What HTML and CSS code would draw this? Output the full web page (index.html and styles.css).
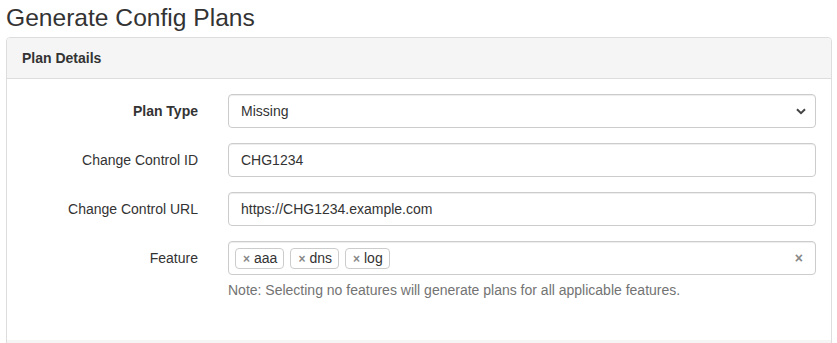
FILE: index.html
```html
<!DOCTYPE html>
<html>
<head>
<meta charset="utf-8">
<link rel="stylesheet" href="styles.css">
</head>
<body>
<h2 class="page-title">Generate Config Plans</h2>
<div class="panel">
  <div class="panel-heading">Plan Details</div>
  <div class="panel-body">
    <div class="form-group">
      <label class="control-label bold">Plan Type</label>
      <div class="control-col">
        <div class="form-control select">
          <span>Missing</span>
          <svg class="chevron" width="10" height="7" viewBox="0 0 10 7"><path d="M1 1.2 L5 5.2 L9 1.2" fill="none" stroke="#444" stroke-width="2"/></svg>
        </div>
      </div>
    </div>
    <div class="form-group">
      <label class="control-label">Change Control ID</label>
      <div class="control-col">
        <div class="form-control">CHG1234</div>
      </div>
    </div>
    <div class="form-group">
      <label class="control-label">Change Control URL</label>
      <div class="control-col">
        <div class="form-control">https://CHG1234.example.com</div>
      </div>
    </div>
    <div class="form-group">
      <label class="control-label">Feature</label>
      <div class="control-col">
        <div class="form-control multi">
          <div class="tags">
            <span class="tag"><span class="tag-x">×</span>aaa</span>
            <span class="tag"><span class="tag-x">×</span>dns</span>
            <span class="tag"><span class="tag-x">×</span>log</span>
          </div>
          <span class="clear">×</span>
        </div>
        <p class="help-block">Note: Selecting no features will generate plans for all applicable features.</p>
      </div>
    </div>
  </div>
  <div class="panel-footer"></div>
</div>
</body>
</html>
```
FILE: styles.css
```css
html, body {
  margin: 0;
  padding: 0;
  background: #fff;
  overflow: hidden;
}
body {
  padding: 0 5px 0 6px;
  font-family: "Liberation Sans", Arial, sans-serif;
  font-size: 14px;
  line-height: 20px;
  color: #333;
}
.page-title {
  margin: 4px 0 6px;
  font-size: 24.6px;
  line-height: 27px;
  font-weight: 500;
  color: #333;
}
.panel {
  border: 1px solid #ddd;
  border-radius: 4px 4px 0 0;
  overflow: hidden;
}
.panel-heading {
  background: #f5f5f5;
  border-bottom: 1px solid #ddd;
  padding: 10px 15px;
  font-weight: bold;
  font-size: 14px;
  line-height: 20px;
  color: #333;
}
.panel-body {
  padding: 15px;
}
.panel-footer {
  background: #f5f5f5;
  height: 3px;
}
.form-group {
  display: grid;
  grid-template-columns: 25% 75%;
  margin: 0 -15px 15px;
}
.control-label {
  padding: 7px 15px 0;
  text-align: right;
  font-size: 14px;
  line-height: 20px;
}
.control-label.bold {
  font-weight: bold;
}
.control-col {
  padding: 0 15px;
}
.form-control {
  box-sizing: border-box;
  height: 34px;
  padding: 6px 12px;
  font-size: 14px;
  line-height: 20px;
  color: #333;
  border: 1px solid #ccc;
  border-radius: 4px;
  box-shadow: inset 0 1px 1px rgba(0,0,0,.075);
  background: #fff;
}
.select {
  display: flex;
  justify-content: space-between;
  align-items: center;
}
.chevron {
  margin-right: -3px;
}
.multi {
  display: flex;
  align-items: center;
  justify-content: space-between;
  padding: 0 12px 0 6px;
}
.tags {
  display: flex;
  gap: 6px;
}
.tag {
  box-sizing: border-box;
  height: 21px;
  border: 1px solid #ccc;
  border-radius: 4px;
  padding: 0 6px 0 7px;
  font-size: 14px;
  line-height: 19px;
  color: #333;
}
.tag-x {
  color: #888;
  font-size: 12px;
  font-weight: bold;
  margin-right: 4px;
}
.clear {
  color: #888;
  font-weight: bold;
  font-size: 14px;
}
.help-block {
  margin: 5px 0 10px;
  color: #737373;
  font-size: 14px;
  line-height: 20px;
}
```
